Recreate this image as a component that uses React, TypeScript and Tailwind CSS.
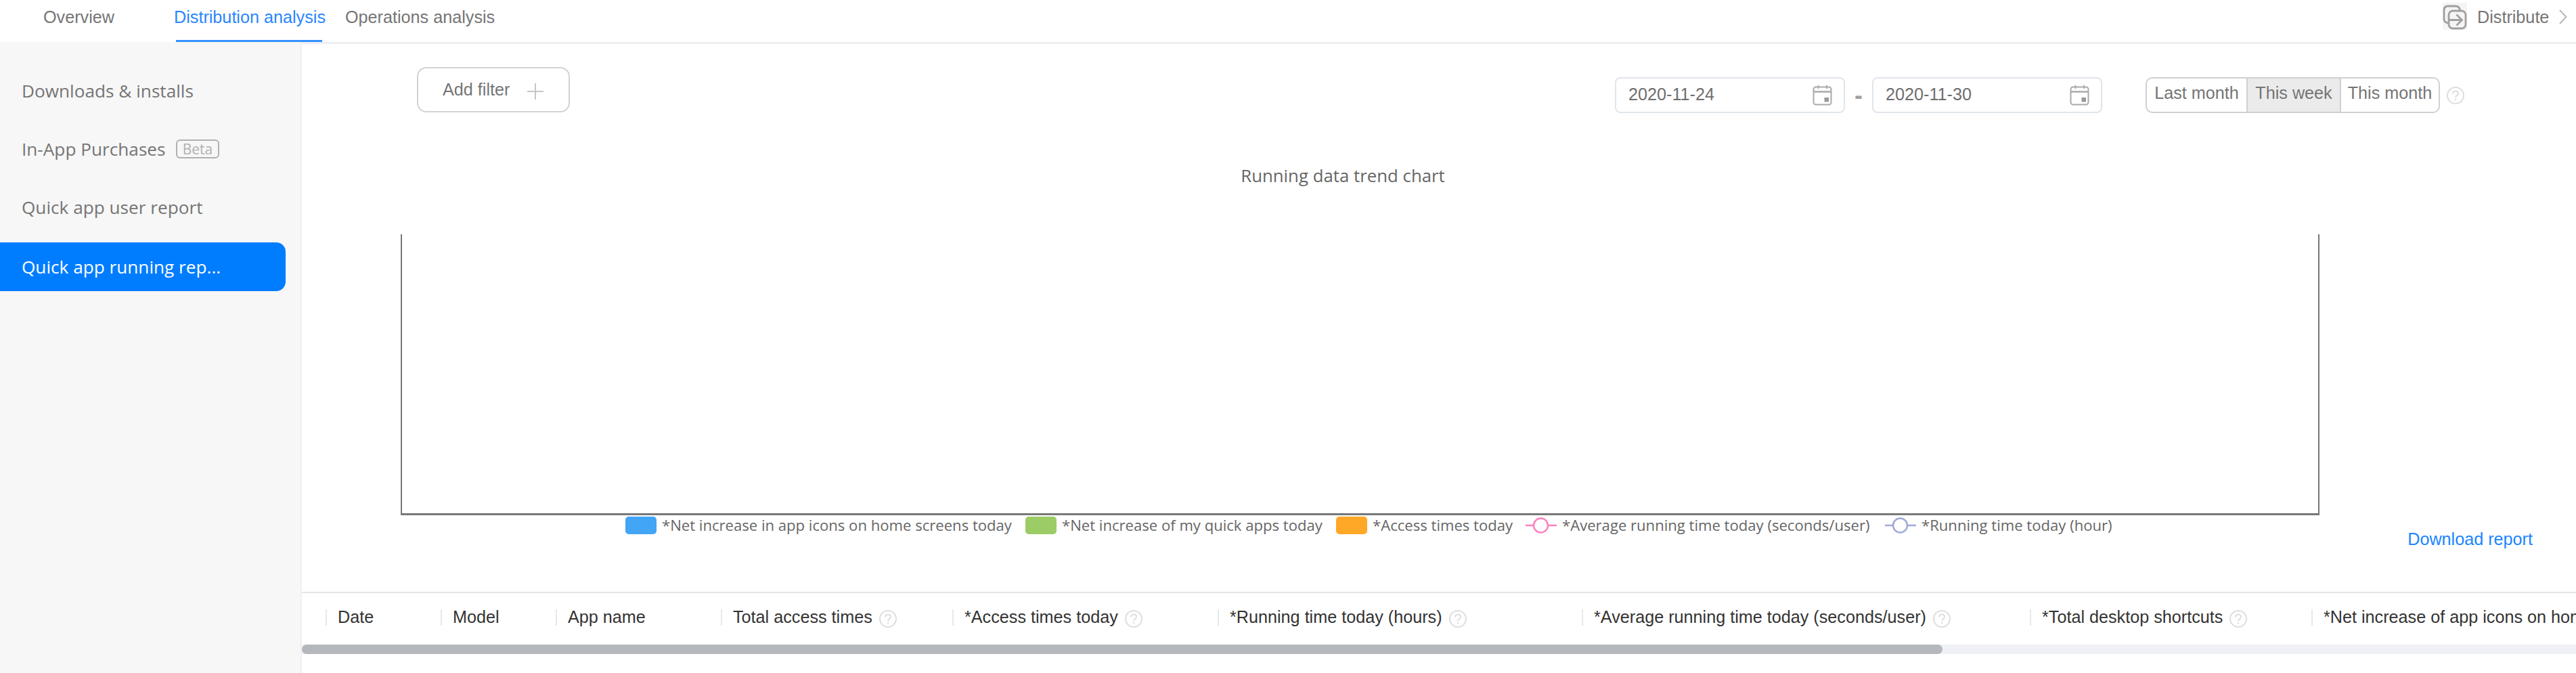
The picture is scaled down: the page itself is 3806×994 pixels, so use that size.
import React from "react";

type LegendEntry = { label: string; kind: "bar" | "line"; mark: string; width: string };
type Column = { label: string; cell: string; help?: boolean };

const ARIAL = "font-['Liberation_Sans',sans-serif]";
const HUMAN = "font-['Open_Sans',sans-serif]";

function Help() {
  return (
    <svg className="h-7 w-7 shrink-0" viewBox="0 0 28 28" fill="none" stroke="#dedede" strokeWidth="2">
      <circle cx="14" cy="14" r="12" />
      <path d="M10 11.500c0-2.400 1.700-4 4-4s4 1.500 4 3.600c0 2.900-4 3.200-4 6.200M14 19v2.400" />
    </svg>
  );
}

function Calendar() {
  return (
    <svg className="h-[31px] w-[29px] shrink-0" viewBox="0 0 29 31" fill="none" stroke="#aaa" strokeWidth="2">
      <rect x="1.500" y="3.500" width="26" height="26" rx="3.500" />
      <path d="M2 10.500h25" strokeWidth="2.500" />
      <path d="M8.500 1v5M21 1v5" />
      <rect x="17.500" y="19" width="6.500" height="6.500" fill="#999" stroke="none" />
    </svg>
  );
}

function DateInput({ value }: { value: string }) {
  return (
    <div className="flex h-[53px] w-[340px] items-center justify-between rounded-[8px] border-2 border-[#e1e5ec] pr-[17px] pl-[18px]">
      <span className="pb-[2px] text-[25.2px] text-[#6e6e6e]">{value}</span>
      <Calendar />
    </div>
  );
}

const legend: LegendEntry[] = [
  { label: "*Net increase in app icons on home screens today", kind: "bar", mark: "#42a5f5", width: "w-[537px]" },
  { label: "*Net increase of my quick apps today", kind: "bar", mark: "#9ccc65", width: "w-[405px]" },
  { label: "*Access times today", kind: "bar", mark: "#ffa726", width: "w-[226px]" },
  { label: "*Average running time today (seconds/user)", kind: "line", mark: "#ff80bf", width: "w-[477px]" },
  { label: "*Running time today (hour)", kind: "line", mark: "#9fa8da", width: "w-[290px]" },
];

const columns: Column[] = [
  { label: "Date", cell: "w-[170px]" },
  { label: "Model", cell: "w-[170px]" },
  { label: "App name", cell: "w-[244px]" },
  { label: "Total access times", cell: "w-[342px]", help: true },
  { label: "*Access times today", cell: "w-[392px]", help: true },
  { label: "*Running time today (hours)", cell: "w-[538px]", help: true },
  { label: "*Average running time today (seconds/user)", cell: "w-[662px]", help: true },
  { label: "*Total desktop shortcuts", cell: "w-[416px]", help: true },
  { label: "*Net increase of app icons on home screens today", cell: "w-[700px]", help: true },
];

export default function App() {
  return (
    <div className={`flex h-[994px] w-[3806px] flex-col overflow-hidden bg-white ${ARIAL}`}>
      <header className="flex h-[62px] shrink-0 items-start text-[25.2px] leading-[30px] text-[#757575]">
        <nav className="flex h-full">
          <a className="ml-[64px] w-[193px] pt-[10px]">Overview</a>
          <a className="w-[253px] text-[#2a86ff]">
            <span className="block h-[59px] pt-[10px]">Distribution analysis</span>
            <span className="ml-[3px] block h-[3px] w-[216px] bg-[#3392ff]" />
          </a>
          <a className="pt-[10px]">Operations analysis</a>
        </nav>
        <div className="ml-auto flex h-[50px] items-start pr-[13px]">
          <svg className="mt-[4px] h-10 w-9 bg-[#f5f5f5]" viewBox="0 0 36 40" fill="none" stroke="#a0a0a0" strokeWidth="2.800">
            <path d="M8 30C4 29.500 2 27.500 2 24V11c0-4 2-6 6-6h11c4 0 6 2 6.500 6" />
            <rect x="9" y="12" width="25" height="26" rx="6" />
            <path d="M10 25.500h18M20.500 17.500l8 8-8 8" />
          </svg>
          <span className="mt-[10px] ml-[15px] w-[121px]">Distribute</span>
          <svg className="mt-[13px] h-6 w-3" viewBox="0 0 12 24" fill="none" stroke="#b8b8b8" strokeWidth="2"><path d="M1 2l9.500 10L1 22" /></svg>
        </div>
      </header>

      <div className="flex min-h-0 flex-1">
        <aside className={`w-[446px] shrink-0 border-r-2 border-[#eeeff5] bg-[#f7f7f7] pt-[36px] text-[26.200px] leading-[72px] whitespace-nowrap text-[#757575] ${HUMAN}`}>
          <div className="mb-[14px] h-[72px] pl-[32px]">Downloads &amp; installs</div>
          <div className="mb-[14px] flex h-[72px] items-center pl-[32px]">
            <span className="w-[212px] shrink-0">In-App Purchases</span>
            <span className="ml-[16px] flex h-[28px] w-[64px] items-center justify-center rounded-[6px] border-2 border-[#b0b0b0] text-[21px] leading-none text-[#b0b0b0]">Beta</span>
          </div>
          <div className="mb-[16px] h-[72px] pl-[32px]">Quick app user report</div>
          <div className="h-[72px] w-[422px] rounded-r-[14px] bg-[#007dff] pl-[32px] text-white">Quick app running rep...</div>
        </aside>

        <main className="flex min-w-0 flex-1 flex-col border-t-[3px] border-[#eeeff3]">
          <div className="flex h-[138px] shrink-0 items-start pt-[34px] pl-[170px]">
            <button className="flex h-[67px] w-[226px] items-center rounded-[14px] border-2 border-[#d3d3d3] pl-[36px] text-[25.2px] text-[#757575]">
              <span className="w-[125px] text-left">Add filter</span>
              <svg className="mt-[4px] h-6 w-6" viewBox="0 0 24 24" stroke="#c6c6c6" strokeWidth="2"><path d="M12 0v24M0 12h24" /></svg>
            </button>
            <div className="mt-[15px] ml-[1544px] flex items-center">
              <DateInput value="2020-11-24" />
              <span className="flex w-[40px] justify-center text-[36px] leading-none font-bold text-[#a0a0a0]">-</span>
              <DateInput value="2020-11-30" />
              <div className="ml-[64px] flex h-[53px] w-[435px] overflow-hidden rounded-[10px] border-2 border-[#d0d0d0] text-center text-[25.2px] leading-[42px] text-[#757575]">
                <span className="w-[147px]">Last month</span>
                <span className="w-[140px] border-x-2 border-[#d0d0d0] bg-[#ebebeb]">This week</span>
                <span className="flex-1">This month</span>
              </div>
              <span className="ml-[9px]"><Help /></span>
            </div>
          </div>

          <div className={`flex h-[143px] shrink-0 items-start justify-center pt-[37px] pr-[284px] text-[25.800px] text-[#666] ${HUMAN}`}>
            <span>Running data trend chart</span>
          </div>
          <div className="ml-[146px] h-[415px] w-[2835px] shrink-0 border-x-2 border-b-[3px] border-[#777]" />
          <div className={`flex h-[30px] shrink-0 items-center pl-[478px] text-[22.100px] leading-[26px] whitespace-nowrap text-[#666] ${HUMAN}`}>
            {legend.map((e) => (
              <div key={e.label} className="flex items-center">
                {e.kind === "bar" ? (
                  <svg className="h-[26px] w-[46px]" viewBox="0 0 46 26"><rect width="46" height="26" rx="5" fill={e.mark} /></svg>
                ) : (
                  <svg className="h-[26px] w-[46px]" viewBox="0 0 46 26" fill="white" stroke={e.mark} strokeWidth="2.500"><path d="M0 13h46" /><circle cx="22.500" cy="13" r="10.500" /></svg>
                )}
                <span className={`ml-[8px] block pb-[2px] ${e.width}`}>{e.label}</span>
              </div>
            ))}
          </div>
          <div className="-mt-[10px] flex h-[93px] shrink-0 items-start justify-end pr-[64px] text-[25.2px] leading-[30px] text-[#1a85ff]">
            <a>Download report</a>
          </div>
          <div className="flex h-[78px] shrink-0 overflow-hidden border-t-2 border-[#e4e4e4] pt-[24px] pl-[35px] text-[25.2px] leading-[24px] whitespace-nowrap text-[#333]">
            {columns.map((c) => (
              <div key={c.label} className={`flex h-[24px] shrink-0 items-center gap-[9px] border-l-2 border-[#e8e8e8] pl-[16px] ${c.cell}`}>
                <span className="pb-[2px]">{c.label}</span>
                {c.help && <span className="mt-[4px]"><Help /></span>}
              </div>
            ))}
          </div>
          <div className="h-[14px] shrink-0 bg-[#eff1f6]"><div className="h-full w-[2424px] rounded-[7px] bg-[#b4b8bc]" /></div>
        </main>
      </div>
    </div>
  );
}
